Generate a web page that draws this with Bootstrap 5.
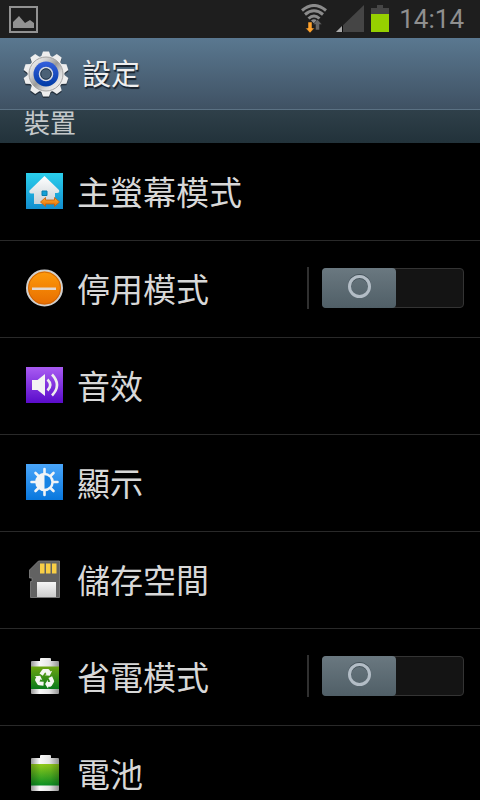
<!DOCTYPE html>
<html lang="zh-Hant">
<head>
<meta charset="utf-8">
<meta name="viewport" content="width=device-width, initial-scale=1">
<title>設定</title>
<link href="https://cdn.jsdelivr.net/npm/bootstrap@5.3.0/dist/css/bootstrap.min.css" rel="stylesheet">
<style>
body { background: #000; color: #d6d6d6; font-family: "Noto Sans CJK TC", sans-serif; }
svg { display: block; flex: none; }
.status-bar { height: 38px; padding: 0 16px 0 9px; background: #1e1e1e; }
.clock { font: 400 26px/36px Roboto, sans-serif; color: #8f8f8f; }
.title-bar { height: 72px; padding: 0 22px; background: linear-gradient(#5a7890, #3f5163); border-bottom: 1px solid #5b7183; }
.title-bar h1 { padding: 0 0 3px 12px; font-size: 29px; line-height: 36px; font-weight: 400; color: #efefef; text-shadow: 1px 2px 1px #17202a; }
.section-head { height: 33px; padding: 0 24px; background: linear-gradient(#2f404a, #22323a); font-size: 26px; line-height: 24px; font-weight: 400; color: #c4c8ca; }
.setting { height: 97px; padding: 0 16px 0 26px; border-bottom: 1px solid #292929; }
.setting:first-of-type { height: 98px; padding-bottom: 1px; }
.setting + .setting { padding-bottom: 2px; }
.setting-link { gap: 13px; color: #d8d8d8; font-size: 33px; line-height: 44px; }
.setting-link:hover { color: #fff; }
.rule { width: 2px; height: 42px; margin-right: 13px; background: #303030; }
.toggle { appearance: none; display: block; flex: none; position: relative; width: 142px; height: 40px; margin: 0; border: 1px solid #343434; border-radius: 4px; background: #141414; cursor: pointer; }
.toggle::before { content: ""; position: absolute; left: -1px; top: -1px; width: 74px; height: 40px; border-radius: 4px; background: linear-gradient(#6a7880, #505f67); }
.toggle::after { content: ""; position: absolute; left: 25px; top: 6px; width: 23px; height: 23px; border: 3px solid #b3bdc6; border-radius: 50%; box-shadow: 0 -1px 0 #46535b, inset 0 1px 0 #46535b; }
.toggle:checked::before { left: 67px; }
.toggle:checked::after { left: 93px; }
</style>
</head>
<body>
<div class="vh-100 overflow-hidden">
  <div class="status-bar d-flex align-items-center justify-content-between">
    <svg width="29" height="27" viewBox="0 0 29 27" aria-hidden="true"><rect x="1" y="1" width="27" height="25" fill="none" stroke="#929292" stroke-width="2"/><path d="M4 22v-6l6-6 6 7 5-3 4 3v5z" fill="#929292"/></svg>
    <div class="d-flex align-items-center">
      <svg width="90" height="30" viewBox="0 0 90 30" aria-hidden="true">
        <g fill="none" stroke="#8b8b8b" stroke-width="3"><path d="M1 6.500Q13-3.500 25 6.500"/><path d="M4 10.500Q13 3 22 10.500"/><path d="M7.500 14.500Q13 9.500 18.500 14.500"/></g>
        <path d="M10 16.500q3-2.500 6 0l-3 3z" fill="#8b8b8b"/>
        <path d="M7 18h4v6h2.500L9 29l-4.500-5H7z" fill="#ffa22c" stroke="#1e1e1e" stroke-width=".5"/>
        <path d="M14.500 26v-5.500H12l4.500-5 4.500 5h-2.500V26z" fill="#666" stroke="#1e1e1e" stroke-width=".5"/>
        <path d="M35 28 63 1v27z" fill="#454545"/><path d="M35 28l6-6v6z" fill="#aaa"/><path d="M41 21.500h1V28h-1z" fill="#0a0a0a"/>
        <path d="M70 4h6V1h6v3h6v24H70z" fill="#454545"/><path d="M70 10h18v18H70z" fill="#96d000"/>
      </svg>
      <time class="clock ms-2">14:14</time>
    </div>
  </div>
  <header class="title-bar d-flex align-items-center">
    <svg width="48" height="48" viewBox="-24 -24 48 48" aria-hidden="true">
      <defs>
        <linearGradient id="metal" x1="0" y1="0" x2="1" y2="1"><stop offset="0" stop-color="#fff"/><stop offset=".3" stop-color="#d0d0d0"/><stop offset=".5" stop-color="#999"/><stop offset=".7" stop-color="#d8d8d8"/><stop offset="1" stop-color="#fff"/></linearGradient>
        <linearGradient id="blue" x1="0" y1="0" x2="0" y2="1"><stop offset="0" stop-color="#3560dd"/><stop offset="1" stop-color="#003ba5"/></linearGradient>
        <g id="teeth"><path id="tooth" d="M-5-17-3-22.500H3L5-17V17L3 22.500H-3L-5 17z"/><use href="#tooth" transform="rotate(36)"/><use href="#tooth" transform="rotate(72)"/><use href="#tooth" transform="rotate(108)"/><use href="#tooth" transform="rotate(144)"/><circle r="18.500"/></g>
      </defs>
      <use href="#teeth" y="1.500" fill="#26323e"/><use href="#teeth" fill="#eee"/>
      <circle r="17" fill="url(#metal)" stroke="#a3a3a3"/>
      <circle r="12.500" fill="url(#blue)"/><circle r="6.500" fill="#4b6176" stroke="#d7dbe2" stroke-width="1.500"/><circle r="5.200" fill="none" stroke="#26394f"/>
    </svg>
    <h1 class="mb-0">設定</h1>
  </header>
  <main>
    <h2 class="section-head mb-0">裝置</h2>
    <div class="setting d-flex align-items-center">
      <a href="#home" class="setting-link d-flex align-items-center flex-grow-1 text-decoration-none">
        <svg width="38" height="38" viewBox="0 0 38 38" aria-hidden="true"><defs><linearGradient id="cyan" x2="0" y2="1"><stop stop-color="#2bd0ed"/><stop offset="1" stop-color="#128dce"/></linearGradient><linearGradient id="silver" x2="0" y2="1"><stop stop-color="#fff"/><stop offset="1" stop-color="#c9d1d6"/></linearGradient><linearGradient id="amber" x2="0" y2="1"><stop stop-color="#ffad2e"/><stop offset="1" stop-color="#e16e08"/></linearGradient></defs>
        <path d="M0 1h37v36H0z" fill="url(#cyan)"/><path d="M18.500 4 33 18q1 3-2 3h-2V32H8V21.500H4.500q-2-1-1-3z" fill="url(#silver)"/><path d="M16 19h5v4.500h-5z" fill="#13a0d6" stroke="#087fae"/><path d="M14.500 30l5-4.500v2.500h9v-2.500l5 4.500-5 4.500V32h-9v2.500z" fill="url(#amber)" stroke="#c65e0a" stroke-width=".8"/></svg>
        <span>主螢幕模式</span></a>
    </div>
    <div class="setting d-flex align-items-center">
      <a href="#blocking" id="blocking-label" class="setting-link d-flex align-items-center flex-grow-1 text-decoration-none">
        <svg width="38" height="38" viewBox="0 0 38 38" aria-hidden="true"><defs><linearGradient id="orange" x2="0" y2="1"><stop stop-color="#ff9c0a"/><stop offset="1" stop-color="#e66c00"/></linearGradient></defs><circle cx="18.500" cy="19" r="17.500" fill="url(#orange)" stroke="#cfcfcf" stroke-width="2"/><circle cx="18.500" cy="19" r="16" fill="none" stroke="#c95e08" stroke-width=".8"/><path d="M6 18.500h24v2.500H6z" fill="#e3d8cf"/></svg>
        <span>停用模式</span></a>
      <span class="rule"></span><input class="toggle" type="checkbox" role="switch" aria-labelledby="blocking-label">
    </div>
    <div class="setting d-flex align-items-center">
      <a href="#sound" class="setting-link d-flex align-items-center flex-grow-1 text-decoration-none">
        <svg width="38" height="38" viewBox="0 0 38 38" aria-hidden="true"><defs><linearGradient id="violet" x2="0" y2="1"><stop stop-color="#a95bf2"/><stop offset="1" stop-color="#5a0ccb"/></linearGradient></defs><path d="M0 1h37v36H0z" fill="url(#violet)"/><path d="M6 14h5.500l7.500-6v22l-7.500-6H6z" fill="#f3f3f3"/><g fill="none" stroke="#eee" stroke-width="2.600"><path d="M21.500 13.500q5.500 5.500 0 11"/><path d="M26 8.500q10 10.500 0 21"/></g></svg>
        <span>音效</span></a>
    </div>
    <div class="setting d-flex align-items-center">
      <a href="#display" class="setting-link d-flex align-items-center flex-grow-1 text-decoration-none">
        <svg width="38" height="38" viewBox="0 0 38 38" aria-hidden="true"><defs><linearGradient id="sky" x2="0" y2="1"><stop stop-color="#4aa6fa"/><stop offset="1" stop-color="#0877dd"/></linearGradient></defs><path d="M0 1h37v36H0z" fill="url(#sky)"/><g stroke="#f1f4f6" stroke-width="2.600" stroke-linecap="round"><path d="M18.500 6v26M5.500 19h26M9.500 10l18 18M27.500 10l-18 18"/></g><circle cx="18.500" cy="19" r="9.300" fill="#f1f4f6"/><path d="M18.500 12.200a6.800 6.800 0 0 1 0 13.600z" fill="#1683e4"/></svg>
        <span>顯示</span></a>
    </div>
    <div class="setting d-flex align-items-center">
      <a href="#storage" class="setting-link d-flex align-items-center flex-grow-1 text-decoration-none">
        <svg width="38" height="38" viewBox="0 0 38 38" aria-hidden="true"><defs><linearGradient id="sdlabel" x2="0" y2="1"><stop stop-color="#f5f5f5"/><stop offset="1" stop-color="#ccc"/></linearGradient></defs><path d="M12.500 1H33.500V37.500H4.500V21.500H6V18H3.500V10z" fill="#626262" stroke="#858585" stroke-width=".8"/><path d="M14 3.500h4.500v10H14zM20 3.500h4.500v10H20zM26 3.500h4.500v10H26z" fill="#f9cf46"/><path d="M11 22h19v15H11z" fill="url(#sdlabel)"/></svg>
        <span>儲存空間</span></a>
    </div>
    <div class="setting d-flex align-items-center">
      <a href="#power" id="power-label" class="setting-link d-flex align-items-center flex-grow-1 text-decoration-none">
        <svg width="38" height="38" viewBox="0 0 38 38" aria-hidden="true"><defs><linearGradient id="steel"><stop stop-color="#999"/><stop offset=".3" stop-color="#fafafa"/><stop offset=".65" stop-color="#e6e6e6"/><stop offset="1" stop-color="#929292"/></linearGradient><linearGradient id="deepgreen" x2="0" y2="1"><stop stop-color="#6ca511"/><stop offset="1" stop-color="#08791a"/></linearGradient></defs><path d="M15 1h9q1 0 1 1v2h7q1 0 1 1v31q0 1-1 1H6q-1 0-1-1V5q0-1 1-1h8V2q0-1 1-1z" fill="url(#steel)"/><path d="M5 9.500h28V32H5z" fill="url(#deepgreen)"/>
        <g fill="#f5f7f3"><path id="recycle" d="M13.500 16.500 16 13q.6-1 1.500-1h4.500q1 0 1.500 1l1 1.600 1.700-.9-2.500 5-5-.4 1.800-1-1.300-2.100-2.400 3.600z"/><use href="#recycle" transform="rotate(120 19 21.500)"/><use href="#recycle" transform="rotate(240 19 21.500)"/></g></svg>
        <span>省電模式</span></a>
      <span class="rule"></span><input class="toggle" type="checkbox" role="switch" aria-labelledby="power-label">
    </div>
    <div class="setting d-flex align-items-center">
      <a href="#battery" class="setting-link d-flex align-items-center flex-grow-1 text-decoration-none">
        <svg width="38" height="38" viewBox="0 0 38 38" aria-hidden="true"><defs><linearGradient id="lime" x2="0" y2="1"><stop stop-color="#93cb1b"/><stop offset="1" stop-color="#0a9124"/></linearGradient><linearGradient id="shade"><stop stop-opacity=".25"/><stop offset=".35" stop-opacity="0"/><stop offset=".7" stop-opacity=".05"/><stop offset="1" stop-opacity=".25"/></linearGradient></defs><path d="M15 1h9q1 0 1 1v2h7q1 0 1 1v31q0 1-1 1H6q-1 0-1-1V5q0-1 1-1h8V2q0-1 1-1z" fill="url(#steel)"/><path d="M5 10h28v21.500H5z" fill="url(#lime)"/><path d="M5 10h28v21.500H5z" fill="url(#shade)"/></svg>
        <span>電池</span></a>
    </div>
  </main>
</div>
<script src="https://cdn.jsdelivr.net/npm/bootstrap@5.3.0/dist/js/bootstrap.bundle.min.js"></script>
</body>
</html>
